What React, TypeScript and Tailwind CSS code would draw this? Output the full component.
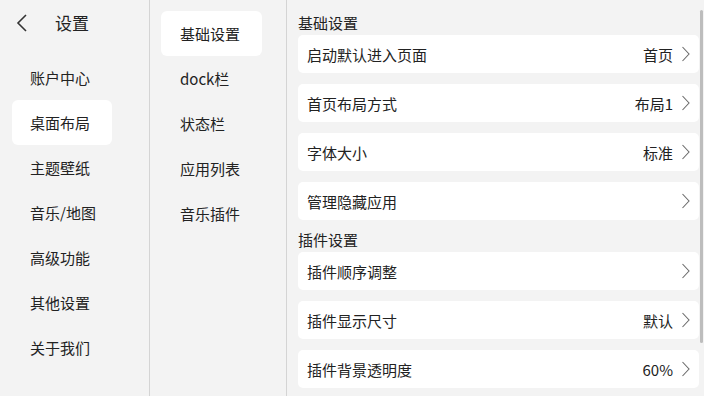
import { ReactNode } from 'react'

const font = { fontFamily: '"Noto Sans CJK SC", "Noto Sans", sans-serif' }

const leftItems = ['账户中心', '桌面布局', '主题壁纸', '音乐/地图', '高级功能', '其他设置', '关于我们']
const midItems = ['基础设置', 'dock栏', '状态栏', '应用列表', '音乐插件']

function Chevron(): JSX.Element {
  return (
    <svg width="9" height="16" viewBox="0 0 9 16" className="ml-[8px] shrink-0">
      <path d="M1.5 1 L8 8 L1.5 15" fill="none" stroke="#6b6b6b" strokeWidth="1.1" />
    </svg>
  )
}

function Row({ label, value }: { label: string; value?: string }): JSX.Element {
  return (
    <div className="flex h-[38px] items-center rounded-[5px] bg-white pl-[9px] pr-[9px]">
      <span className="flex-1">{label}</span>
      {value && <span>{value}</span>}
      <Chevron />
    </div>
  )
}

function Section({ title, children }: { title: string; children: ReactNode }): JSX.Element {
  return (
    <div className="flex flex-col">
      <div className="flex h-[28px] items-center pt-[2px]">{title}</div>
      <div className="flex flex-col gap-[11px]">{children}</div>
    </div>
  )
}

export default function App(): JSX.Element {
  return (
    <div
      className="relative flex h-[396px] w-[704px] overflow-hidden bg-[#f3f3f3] text-[15px] leading-none text-[#222]"
      style={font}
    >
      {/* level 1 */}
      <div className="flex w-[150px] shrink-0 flex-col border-r border-[#d4d4d4] px-[12px]">
        <div className="flex h-[45px] items-center">
          <svg width="14" height="20" viewBox="0 0 14 20" className="ml-[3px]">
            <path d="M11 2 L3 10 L11 18" fill="none" stroke="#333" strokeWidth="1.6" />
          </svg>
          <span className="ml-[26px] text-[17px]">设置</span>
        </div>
        <div className="mt-[10px] flex flex-col">
          {leftItems.map((t) => (
            <div
              key={t}
              className={`flex h-[45px] w-[100px] items-center rounded-[6px] pl-[18px] ${t === '桌面布局' ? 'bg-white' : ''}`}
            >
              {t}
            </div>
          ))}
        </div>
      </div>

      {/* level 2 */}
      <div className="flex w-[137px] shrink-0 flex-col border-r border-[#d4d4d4] px-[11px] pt-[11px]">
        {midItems.map((t) => (
          <div
            key={t}
            className={`flex h-[45px] w-[101px] items-center rounded-[6px] pl-[19px] ${t === '基础设置' ? 'bg-white' : ''}`}
          >
            {t}
          </div>
        ))}
      </div>

      {/* content */}
      <div className="flex flex-1 flex-col gap-[4px] pl-[11px] pr-[5px] pt-[7px]">
        <Section title="基础设置">
          <Row label="启动默认进入页面" value="首页" />
          <Row label="首页布局方式" value="布局1" />
          <Row label="字体大小" value="标准" />
          <Row label="管理隐藏应用" />
        </Section>
        <Section title="插件设置">
          <Row label="插件顺序调整" />
          <Row label="插件显示尺寸" value="默认" />
          <Row label="插件背景透明度" value="60%" />
        </Section>
      </div>

      <div className="absolute right-[1px] top-[10px] h-[333px] w-[3px] rounded-full bg-[#bdbdbd]" />
    </div>
  )
}
